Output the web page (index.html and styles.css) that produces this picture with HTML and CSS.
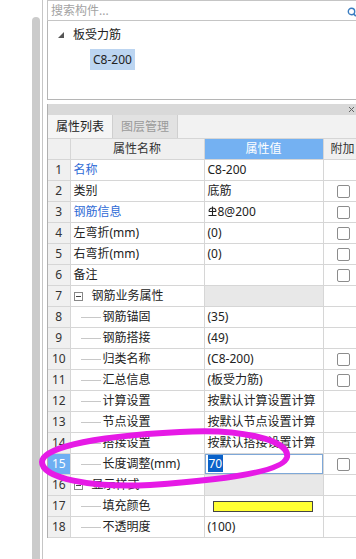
FILE: index.html
```html
<!DOCTYPE html>
<html>
<head>
    <link rel="stylesheet" href="styles.css">
</head>
<body>
    <div class="app">
        <!-- painel esquerdo com barra de rolagem -->
        <div class="side"><div class="thumb"></div></div>

        <div class="main">
            <div class="search">
                <span class="placeholder">搜索构件...</span>
                <svg class="mag" width="9" height="10" viewBox="0 0 9 10">
                    <circle cx="4.5" cy="4.5" r="3.2" fill="none" stroke="#3a7cc0" stroke-width="1.4"/>
                    <line x1="6.6" y1="6.8" x2="8.8" y2="9.2" stroke="#3a7cc0" stroke-width="1.6"/>
                </svg>
            </div>

            <div class="tree">
                <div class="node">
                    <svg class="tri" width="6" height="6" viewBox="0 0 6 6"><polygon points="6,0 6,6 0,6" fill="#555"/></svg>
                    板受力筋
                </div>
                <div class="leaf"><span class="selected">C8-200</span></div>
            </div>

            <div class="panel">
                <div class="caption">
                    <svg class="pin" width="5" height="5" viewBox="0 0 5 5"><path d="M0 0L5 5M5 0L0 5" stroke="#666" stroke-width="1"/></svg>
                </div>
                <div class="tabs">
                    <span class="tab active">属性列表</span>
                    <span class="tab">图层管理</span>
                    <span class="tab-rest"></span>
                </div>

                <table class="props">
                    <colgroup>
                        <col class="c-num"><col class="c-name"><col class="c-val"><col class="c-ext">
                    </colgroup>
                    <tr>
                        <th class="num"></th>
                        <th>属性名称</th>
                        <th class="val-head">属性值</th>
                        <th class="ext-head">附加</th>
                    </tr>
                    <tr>
                        <td class="num">1</td>
                        <td class="name link">名称</td>
                        <td class="val">C8-200</td>
                        <td class="ext"></td>
                    </tr>
                    <tr>
                        <td class="num">2</td>
                        <td class="name">类别</td>
                        <td class="val">底筋</td>
                        <td class="ext"><span class="chk"></span></td>
                    </tr>
                    <tr>
                        <td class="num">3</td>
                        <td class="name link">钢筋信息</td>
                        <td class="val"><svg class="grade" width="9" height="11" viewBox="0 0 9 11"><path d="M1 5.5C1 3 2.5 2 4.5 2S8 3 8 5.5M4.5 0.5V9.5M0.5 9.5H8.5M1 5.5H8" fill="none" stroke="#222" stroke-width="1.1"/></svg>8@200</td>
                        <td class="ext"><span class="chk"></span></td>
                    </tr>
                    <tr>
                        <td class="num">4</td>
                        <td class="name">左弯折(mm)</td>
                        <td class="val">(0)</td>
                        <td class="ext"><span class="chk"></span></td>
                    </tr>
                    <tr>
                        <td class="num">5</td>
                        <td class="name">右弯折(mm)</td>
                        <td class="val">(0)</td>
                        <td class="ext"><span class="chk"></span></td>
                    </tr>
                    <tr>
                        <td class="num">6</td>
                        <td class="name">备注</td>
                        <td class="val"></td>
                        <td class="ext"><span class="chk"></span></td>
                    </tr>
                    <tr>
                        <td class="num">7</td>
                        <td class="name"><span class="toggle"></span>钢筋业务属性</td>
                        <td class="val group"></td>
                        <td class="ext"></td>
                    </tr>
                    <tr>
                        <td class="num">8</td>
                        <td class="name"><span class="branch"></span>钢筋锚固</td>
                        <td class="val">(35)</td>
                        <td class="ext"></td>
                    </tr>
                    <tr>
                        <td class="num">9</td>
                        <td class="name"><span class="branch"></span>钢筋搭接</td>
                        <td class="val">(49)</td>
                        <td class="ext"></td>
                    </tr>
                    <tr>
                        <td class="num">10</td>
                        <td class="name"><span class="branch"></span>归类名称</td>
                        <td class="val">(C8-200)</td>
                        <td class="ext"><span class="chk"></span></td>
                    </tr>
                    <tr>
                        <td class="num">11</td>
                        <td class="name"><span class="branch"></span>汇总信息</td>
                        <td class="val">(板受力筋)</td>
                        <td class="ext"><span class="chk"></span></td>
                    </tr>
                    <tr>
                        <td class="num">12</td>
                        <td class="name"><span class="branch"></span>计算设置</td>
                        <td class="val">按默认计算设置计算</td>
                        <td class="ext"></td>
                    </tr>
                    <tr>
                        <td class="num">13</td>
                        <td class="name"><span class="branch"></span>节点设置</td>
                        <td class="val">按默认节点设置计算</td>
                        <td class="ext"></td>
                    </tr>
                    <tr>
                        <td class="num">14</td>
                        <td class="name"><span class="branch"></span>搭接设置</td>
                        <td class="val">按默认搭接设置计算</td>
                        <td class="ext"></td>
                    </tr>
                    <tr>
                        <td class="num current">15</td>
                        <td class="name"><span class="branch"></span>长度调整(mm)</td>
                        <td class="val editing"><div class="edit"><span class="sel-text">70</span></div></td>
                        <td class="ext"><span class="chk"></span></td>
                    </tr>
                    <tr>
                        <td class="num">16</td>
                        <td class="name"><span class="toggle"></span>显示样式</td>
                        <td class="val group"></td>
                        <td class="ext"></td>
                    </tr>
                    <tr>
                        <td class="num">17</td>
                        <td class="name"><span class="branch"></span>填充颜色</td>
                        <td class="val"><span class="swatch"></span></td>
                        <td class="ext"></td>
                    </tr>
                    <tr>
                        <td class="num">18</td>
                        <td class="name"><span class="branch"></span>不透明度</td>
                        <td class="val">(100)</td>
                        <td class="ext"></td>
                    </tr>
                </table>
            </div>
        </div>

        <!-- marcação feita à mão por cima da tabela -->
        <svg class="markup" width="356" height="559" viewBox="0 0 356 559">
            <path d="M180 432C240 428 290 440 287 457C284 472 220 480 150 485C90 488 42 478 42 462C42 450 80 437 180 432Z"
                  fill="none" stroke="#e61ae6" stroke-width="6"/>
        </svg>
    </div>
</body>
</html>
```

FILE: styles.css
```css
body {
    margin: 0;
    width: 356px;
    height: 559px;
    overflow: hidden;
    background: #fff;
    font-family: "Noto Sans", "Noto Sans CJK SC", sans-serif;
    font-size: 12px;
    color: #222;
}
.app {
    position: relative;
    display: flex;
    height: 559px;
}
.side {
    flex: none;
    width: 42px;
    border-right: 1px solid #c6c6c6;
    display: flex;
    justify-content: flex-end;
}
.thumb {
    width: 8px;
    margin: 17px 2px 0 0;
    background: #cbcbcb;
    border-radius: 4px 4px 0 0;
}
.main {
    flex: none;
    width: 309px;
    margin-left: 4px;
    overflow: hidden;
}
.search {
    height: 19px;
    border: 1px solid #c5c5c5;
    border-right: none;
    display: flex;
    align-items: center;
    justify-content: space-between;
    padding-left: 3px;
}
.placeholder {
    color: #a3a3a3;
    line-height: 19px;
}
.mag {
    margin-top: 2px;
}
.tree {
    height: 78px;
    border-left: 1px solid #b5b5b5;
    border-bottom: 1px solid #b5b5b5;
}
.node {
    padding: 4px 0 0 10px;
    line-height: 20px;
    height: 20px;
}
.tri {
    margin-right: 6px;
    vertical-align: 1px;
}
.leaf {
    padding: 4px 0 0 42px;
}
.selected {
    display: inline-block;
    height: 21px;
    line-height: 21px;
    padding: 0 3px;
    background: #bcd5f1;
}
.panel {
    margin-top: 4px;
    border-left: 1px solid #b0b0b0;
}
.caption {
    height: 11px;
    background: #d9d9d9;
    display: flex;
    justify-content: flex-end;
    align-items: center;
}
.pin {
    margin-right: 2px;
}
.tabs {
    display: flex;
    height: 23px;
    background: #f2f2f2;
}
.tab {
    width: 64px;
    border-right: 1px solid #cfcfcf;
    text-align: center;
    line-height: 23px;
    background: #e2e2e2;
    color: #9a9a9a;
}
.tab.active {
    background: #f5f5f5;
    color: #222;
}
.tab-rest {
    flex: 1;
}
.props {
    border-collapse: collapse;
    table-layout: fixed;
    width: 316px;
}
.c-num { width: 22px; }
.c-name { width: 134px; }
.c-val { width: 119px; }
.c-ext { width: 41px; }
th, td {
    border: 1px solid #d6d6d6;
    height: 20px;
    line-height: 20px;
    padding: 0 3px;
    white-space: nowrap;
    overflow: hidden;
}
th:first-child, td:first-child {
    border-left: none;
}
th {
    font-weight: normal;
    background: #f0f0f0;
    text-align: center;
    color: #333;
}
th.val-head {
    background: #74b1f2;
    color: #fff;
}
th.ext-head {
    text-align: left;
    padding-left: 7px;
}
td.num {
    background: #f0f0f0;
    text-align: center;
    padding: 0;
    color: #333;
}
td.num.current {
    background: #6eaff2;
    color: #fff;
}
td.link {
    color: #2f6bd6;
}
td.val.group {
    background: #e8e8e8;
}
td.ext {
    padding-left: 13px;
}
.chk {
    display: inline-block;
    width: 11px;
    height: 11px;
    border: 1px solid #8c8c8c;
    border-radius: 2px;
    vertical-align: middle;
}
.toggle {
    display: inline-block;
    position: relative;
    width: 7px;
    height: 7px;
    border: 1px solid #888;
    margin-right: 9px;
    vertical-align: -1px;
}
.toggle::after {
    content: "";
    position: absolute;
    left: 1px;
    right: 1px;
    top: 3px;
    height: 1px;
    background: #444;
}
.branch {
    display: inline-block;
    width: 20px;
    border-top: 1px solid #c8c8c8;
    margin: 0 2px 0 7px;
    vertical-align: middle;
}
.grade {
    vertical-align: -1px;
    margin-right: 1px;
}
td.editing {
    padding: 0;
}
.edit {
    height: 18px;
    line-height: 18px;
    border: 1px solid #7ea8d8;
    padding-left: 2px;
}
.sel-text {
    background: #0a62c9;
    color: #fff;
    padding: 0 1px;
}
.swatch {
    display: inline-block;
    width: 98px;
    height: 9px;
    background: #ffff33;
    border: 1px solid #444;
    margin-left: 5px;
    vertical-align: middle;
}
.markup {
    position: absolute;
    left: 0;
    top: 0;
    pointer-events: none;
}
```
